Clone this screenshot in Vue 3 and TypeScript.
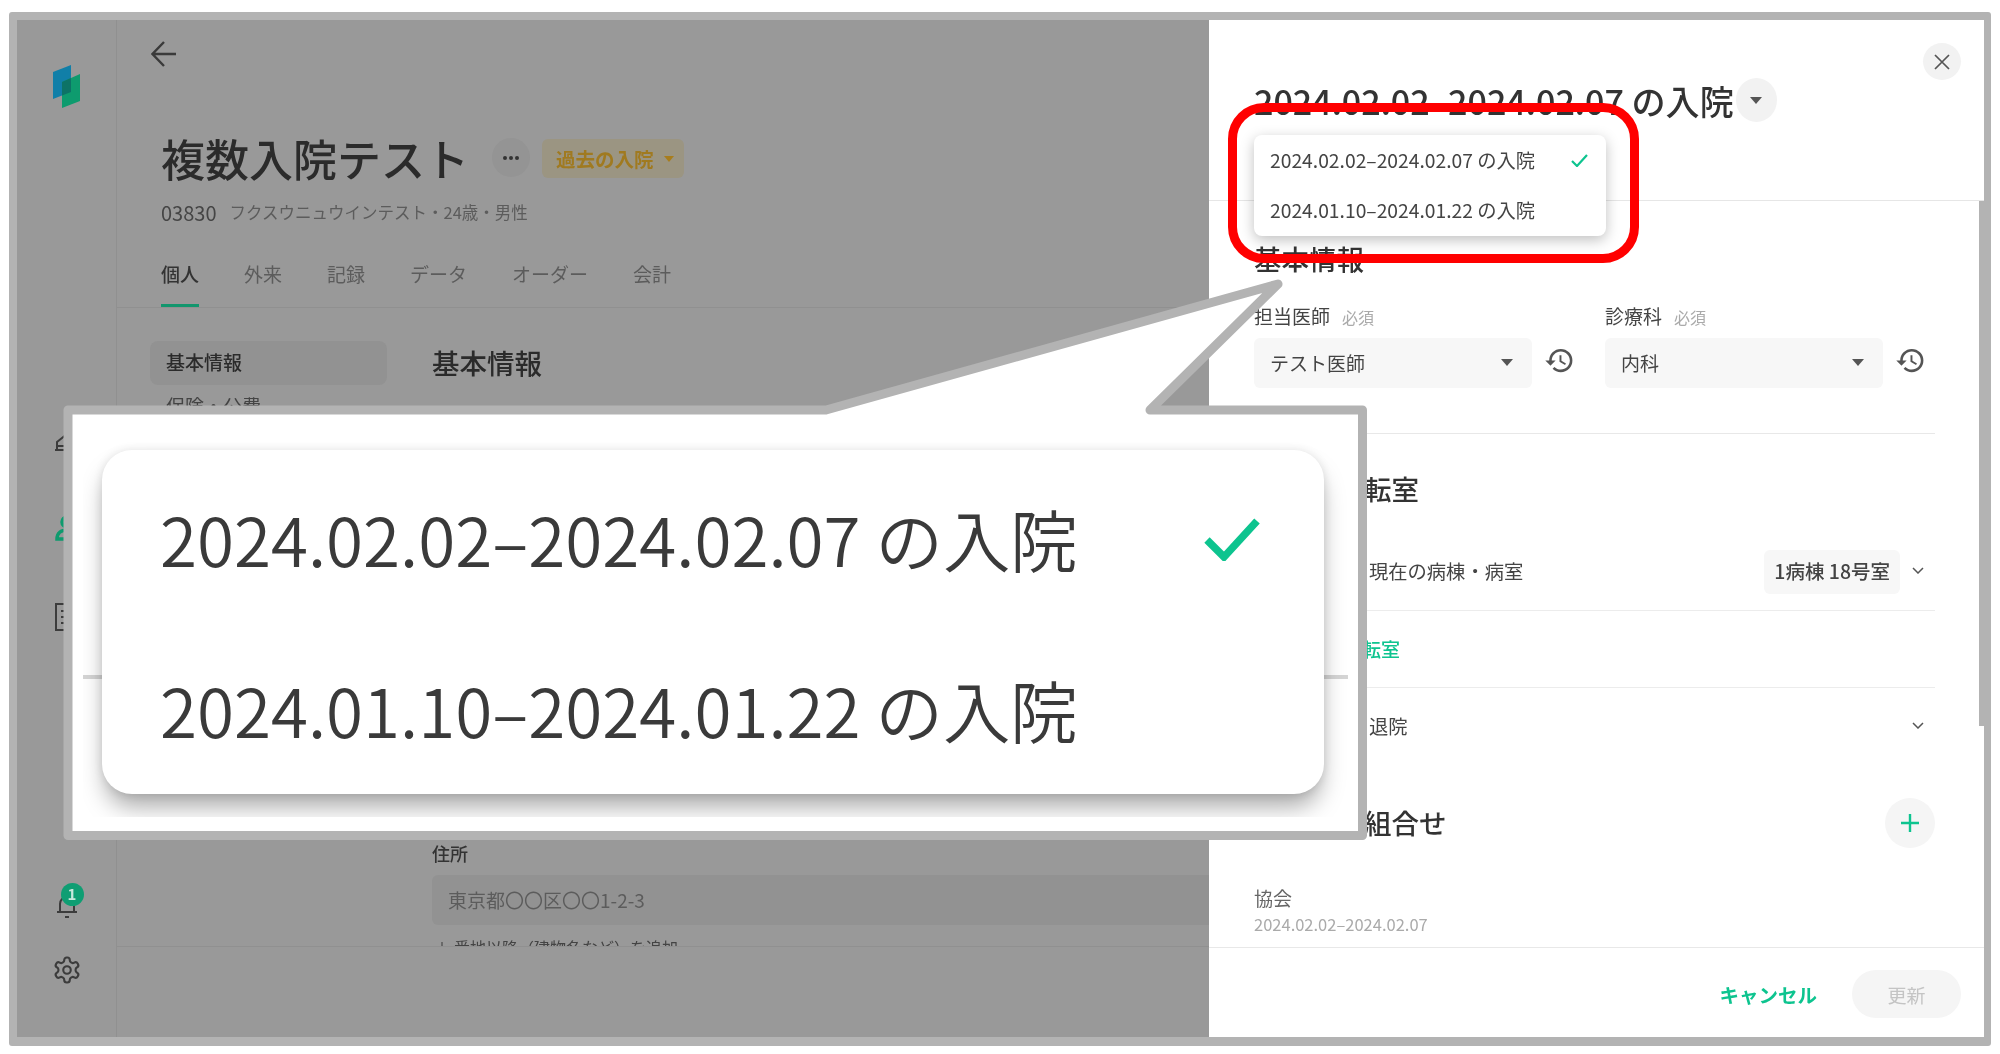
<script setup lang="ts">
const tabs = ['個人', '外来', '記録', 'データ', 'オーダー', '会計'];
const stays = ['2024.02.02–2024.02.07 の入院', '2024.01.10–2024.01.22 の入院'];
const historyPath =
  'M13 3a9 9 0 0 0-9 9H1l3.89 3.89.07.14L9 12H6c0-3.87 3.13-7 7-7s7 3.13 7 7-3.13 7-7 7c-1.93 0-3.68-.79-4.94-2.06l-1.42 1.42A8.954 8.954 0 0 0 13 21a9 9 0 0 0 0-18zm-1 5v5l4.28 2.54.72-1.21-3.5-2.08V8H12z';
const gearPath =
  'M12.22 2h-.44a2 2 0 0 0-2 2v.18a2 2 0 0 1-1 1.73l-.43.25a2 2 0 0 1-2 0l-.15-.08a2 2 0 0 0-2.73.73l-.22.38a2 2 0 0 0 .73 2.73l.15.1a2 2 0 0 1 1 1.72v.51a2 2 0 0 1-1 1.74l-.15.09a2 2 0 0 0-.73 2.73l.22.38a2 2 0 0 0 2.73.73l.15-.08a2 2 0 0 1 2 0l.43.25a2 2 0 0 1 1 1.73V20a2 2 0 0 0 2 2h.44a2 2 0 0 0 2-2v-.18a2 2 0 0 1 1-1.73l.43-.25a2 2 0 0 1 2 0l.15.08a2 2 0 0 0 2.73-.73l.22-.39a2 2 0 0 0-.73-2.73l-.15-.08a2 2 0 0 1-1-1.74v-.5a2 2 0 0 1 1-1.74l.15-.09a2 2 0 0 0 .73-2.73l-.22-.38a2 2 0 0 0-2.73-.73l-.15.08a2 2 0 0 1-2 0l-.43-.25a2 2 0 0 1-1-1.73V4a2 2 0 0 0-2-2z';
</script>

<template>
  <div class="page">
    <div class="frame">
      <aside class="rail">
        <svg class="logo" width="27" height="44" viewBox="0 0 27 44">
          <polygon points="0,8 18,1 18,28 0,35" fill="#117fa8" />
          <polygon points="9,18 27,10 27,37 9,44" fill="#0e9b6e" />
          <polygon points="9,18 18,14 18,28 9,31.5" fill="#0d7366" />
        </svg>
        <div class="rail-nav">
          <svg width="28" height="28" viewBox="0 0 28 28" fill="none" stroke="#3c3c3c" stroke-width="2">
            <path d="M2 25h24M4 25v-8l10-8 10 8v8M4 21h20" />
          </svg>
          <svg width="28" height="28" viewBox="0 0 28 28" fill="none" stroke="#0e9b6e" stroke-width="3.5">
            <circle cx="14" cy="8" r="5" />
            <path d="M4 25c0-6 4-9 10-9s10 3 10 9z" />
          </svg>
          <svg width="28" height="28" viewBox="0 0 28 28" fill="none" stroke="#3c3c3c" stroke-width="2">
            <path d="M3 1h22v26H3zM8 8h12M8 14h12M8 20h12" />
          </svg>
        </div>
        <div class="rail-bottom">
          <div class="bell">
            <svg width="28" height="28" viewBox="0 0 28 28" fill="none" stroke="#3c3c3c" stroke-width="2">
              <path d="M4 21h20M7 21v-8a7 7 0 0 1 14 0v8M12 26h4" />
            </svg>
            <span class="badge">1</span>
          </div>
          <svg width="30" height="30" viewBox="0 0 24 24" fill="none" stroke="#3c3c3c" stroke-width="1.7">
            <path :d="gearPath" />
            <circle cx="12" cy="12" r="3" />
          </svg>
        </div>
      </aside>

      <main class="main">
        <header class="head">
          <div class="topbar">
            <svg width="26" height="26" viewBox="0 0 26 26" fill="none" stroke="#3a3a3a" stroke-width="2.4">
              <path d="M25 13H2M13 1 1.5 13 13 25" />
            </svg>
          </div>
          <div class="title-row">
            <h1>複数入院テスト</h1>
            <button class="more">
              <svg width="16" height="4" viewBox="0 0 16 4" fill="#333">
                <circle cx="2" cy="2" r="2" /><circle cx="8" cy="2" r="2" /><circle cx="14" cy="2" r="2" />
              </svg>
            </button>
            <span class="past">過去の入院<i class="caret past-caret"></i></span>
          </div>
          <div class="meta"><b>03830</b><span>フクスウニュウインテスト・24歳・男性</span></div>
          <nav class="tabs">
            <a v-for="(t, i) in tabs" :key="t" :class="{ on: i === 0 }">{{ t }}</a>
          </nav>
        </header>
        <div class="body">
          <div class="side">
            <div class="side-item on">基本情報</div>
            <div class="side-item">保険・公費</div>
          </div>
          <div class="content">
            <h2>基本情報</h2>
            <div class="addr">
              <label>住所</label>
              <div class="addr-input">東京都〇〇区〇〇1-2-3</div>
              <div class="addr-add"><span class="plus">＋</span>番地以降（建物名など）を追加</div>
            </div>
          </div>
        </div>
        <div class="main-foot"></div>
      </main>

      <section class="panel">
        <header class="panel-head">
          <div class="stay">
            <span class="stay-title">{{ stays[0] }}</span>
            <button class="stay-btn"><i class="caret"></i></button>
          </div>
          <button class="close">
            <svg width="16" height="16" viewBox="0 0 16 16" stroke="#555" stroke-width="1.7">
              <path d="M1 1l14 14M15 1 1 15" />
            </svg>
          </button>
        </header>

        <div class="panel-body">
          <h2>基本情報</h2>
          <div class="fields">
            <div class="field">
              <div class="field-label">担当医師<small>必須</small></div>
              <div class="field-row">
                <div class="select">テスト医師<i class="caret"></i></div>
                <svg width="31" height="31" viewBox="0 0 24 24" fill="#555"><path :d="historyPath" /></svg>
              </div>
            </div>
            <div class="field">
              <div class="field-label">診療科<small>必須</small></div>
              <div class="field-row">
                <div class="select">内科<i class="caret"></i></div>
                <svg width="31" height="31" viewBox="0 0 24 24" fill="#555"><path :d="historyPath" /></svg>
              </div>
            </div>
          </div>

          <h2 class="sec">入退院・転室</h2>
          <div class="row row-room">
            <span>現在の病棟・病室</span>
            <div class="row-end">
              <span class="room">1病棟 18号室</span>
              <svg class="chev" width="12" height="7" viewBox="0 0 12 7" fill="none" stroke="#555" stroke-width="1.5">
                <path d="M1 1l5 5 5-5" />
              </svg>
            </div>
          </div>
          <div class="row-link">転室</div>
          <div class="row row-leave">
            <span>退院</span>
            <svg class="chev" width="12" height="7" viewBox="0 0 12 7" fill="none" stroke="#555" stroke-width="1.5">
              <path d="M1 1l5 5 5-5" />
            </svg>
          </div>

          <div class="ins-head">
            <h2>保険公費組合せ</h2>
            <button class="add">
              <svg width="18" height="18" viewBox="0 0 18 18" stroke="#0dc48f" stroke-width="2.4">
                <path d="M9 0v18M0 9h18" />
              </svg>
            </button>
          </div>
          <div class="ins-name">協会</div>
          <div class="ins-date">2024.02.02–2024.02.07</div>
        </div>

        <footer class="panel-foot">
          <button class="cancel">キャンセル</button>
          <button class="update">更新</button>
        </footer>

        <div class="scroll"></div>
        <ul class="menu">
          <li v-for="(s, i) in stays" :key="s">
            {{ s }}
            <svg v-if="i === 0" width="17" height="13" viewBox="0 0 17 13" fill="none" stroke="#0dc48f" stroke-width="2.2">
              <path d="M1 7l5 5L16 1" />
            </svg>
          </li>
        </ul>
        <div class="mark"></div>
      </section>
    </div>

    <!-- 拡大吹き出し -->
    <div class="callout">
      <svg class="callout-shape" width="1400" height="600" viewBox="0 0 1400 600">
        <path
          d="M68 410H826L1278 284 1150 410H1362.5V835.5H68Z"
          fill="#fff"
          stroke="#b3b3b3"
          stroke-width="9"
          stroke-linejoin="round"
          transform="translate(0 -270)"
        />
      </svg>
      <div class="crop">
        <div class="crop-line"></div>
        <ul class="big-menu">
          <li v-for="(s, i) in stays" :key="s">
            {{ s }}
            <svg v-if="i === 0" width="56" height="43" viewBox="0 0 56 43" fill="none" stroke="#0dc48f" stroke-width="7.5">
              <path d="M3 22l17 17L53 3" />
            </svg>
          </li>
        </ul>
      </div>
    </div>
  </div>
</template>

<style>
html, body {
  margin: 0;
  background: #fff;
  overflow: hidden;
}
</style>

<style scoped>
.page {
  position: relative;
  box-sizing: border-box;
  width: 2000px;
  height: 1054px;
  padding: 12px 9px 8px;
  font-family: "Noto Sans CJK JP", "Noto Sans", sans-serif;
  color: #333;
  filter: blur(0.45px);
}
.frame {
  box-sizing: border-box;
  display: flex;
  height: 1034px;
  width: 1982px;
  border: solid #b3b3b3;
  border-width: 8px 7px 9px 8px;
  border-radius: 3px;
  background: #999;
}
button {
  border: 0;
  padding: 0;
  font: inherit;
  display: flex;
  align-items: center;
  justify-content: center;
}
h1, h2, ul { margin: 0; padding: 0; }
ul { list-style: none; }

.caret {
  display: block;
  width: 0;
  height: 0;
  border: 6px solid transparent;
  border-top: 7px solid #555;
  border-bottom: 0;
}

/* rail */
.rail {
  box-sizing: border-box;
  flex: 0 0 100px;
  display: flex;
  flex-direction: column;
  align-items: center;
  padding: 44px 0 52px;
  border-right: 1px solid #909090;
}
.rail-nav {
  display: flex;
  flex-direction: column;
  gap: 61px;
  margin-top: 317px;
}
.rail-bottom {
  margin-top: auto;
  display: flex;
  flex-direction: column;
  align-items: center;
  gap: 36px;
}
.bell { position: relative; height: 28px; }
.badge {
  position: absolute;
  left: 8px;
  top: -8px;
  width: 23px;
  height: 23px;
  border-radius: 50%;
  background: #0f9e73;
  color: #c8e8dc;
  font-size: 15px;
  font-weight: 700;
  line-height: 22px;
  text-align: center;
}

/* main (dimmed) */
.main {
  flex: 0 0 1092px;
  min-width: 0;
  display: flex;
  flex-direction: column;
}
.head { padding-left: 44px; flex: none; }
.topbar {
  height: 68px;
  display: flex;
  align-items: center;
  margin-left: -10px;
}
.title-row {
  display: flex;
  align-items: flex-start;
  height: 46px;
  margin-top: 50px;
}
h1 {
  font-size: 44px;
  line-height: 40px;
  font-weight: 500;
  color: #2b2b2b;
}
.more {
  width: 38px;
  height: 39px;
  border-radius: 50%;
  background: #949494;
  margin-left: 23px;
}
.past {
  box-sizing: border-box;
  height: 39px;
  width: 142px;
  margin-left: 12px;
  margin-top: 1px;
  padding-left: 14px;
  display: flex;
  align-items: center;
  gap: 10px;
  border-radius: 6px;
  background: #9b9582;
  color: #a07a20;
  font-size: 19.5px;
  font-weight: 700;
}
.past-caret {
  border-width: 5px;
  border-top: 6px solid #a87d1c;
  border-bottom: 0;
}
.meta {
  display: flex;
  align-items: center;
  gap: 13px;
  height: 24px;
  margin-top: 16px;
  font-size: 16.5px;
  color: #5c5c5c;
}
.meta b {
  font-size: 20px;
  font-weight: 400;
  color: #454545;
}
.tabs {
  display: flex;
  gap: 45px;
  height: 49px;
  margin: 34px 0 0 -44px;
  padding-left: 44px;
  border-bottom: 1px solid #909090;
}
.tabs a {
  height: 46px;
  line-height: 32px;
  font-size: 19px;
  color: #5c5c5c;
  border-bottom: 3px solid transparent;
}
.tabs a.on {
  color: #333;
  font-weight: 500;
  border-bottom-color: #12966d;
}
.body {
  flex: 1;
  min-height: 0;
  overflow: hidden;
  display: flex;
  padding: 33px 0 0 33px;
}
.side { flex: 0 0 237px; }
.side-item {
  height: 44px;
  line-height: 42px;
  padding-left: 16px;
  font-size: 19px;
  color: #444;
  border-radius: 8px;
}
.side-item.on {
  background: #929292;
  font-weight: 500;
  color: #2b2b2b;
}
.content {
  flex: none;
  width: 800px;
  margin-left: 45px;
}
.content h2 {
  margin-top: 1px;
  font-size: 27.5px;
  line-height: 40px;
  font-weight: 500;
  color: #2b2b2b;
}
.addr { margin-top: 459px; }
.addr label {
  display: block;
  font-size: 18px;
  line-height: 24px;
  font-weight: 500;
  color: #333;
}
.addr-input {
  box-sizing: border-box;
  height: 50px;
  margin-top: 10px;
  padding-left: 16px;
  line-height: 50px;
  font-size: 19px;
  border-radius: 6px;
  background: #929292;
  color: #5c5c5c;
}
.addr-add {
  margin-top: 10px;
  font-size: 16px;
  line-height: 24px;
  color: #444;
}
.plus { margin: 0 4px 0 2px; }
.main-foot {
  flex: 0 0 90px;
  border-top: 1px solid #909090;
}

/* panel */
.panel {
  position: relative;
  flex: 1;
  min-width: 0;
  display: flex;
  flex-direction: column;
  background: #fff;
}
.panel-head {
  box-sizing: border-box;
  flex: 0 0 181px;
  display: flex;
  justify-content: space-between;
  padding: 0 23px 0 45px;
  border-bottom: 1px solid #e6e6e6;
}
.stay {
  display: flex;
  align-items: flex-start;
  margin-top: 58px;
}
.stay-title {
  font-size: 34.1px;
  line-height: 44px;
  font-weight: 500;
  color: #333;
}
.stay-btn {
  width: 41px;
  height: 44px;
  border-radius: 50%;
  background: #f2f2f2;
  margin-left: 2px;
}
.close {
  width: 38px;
  height: 37px;
  margin-top: 23px;
  border-radius: 50%;
  background: #f2f2f2;
}
.panel-body {
  box-sizing: border-box;
  flex: 1;
  min-height: 0;
  overflow: hidden;
  padding: 37px 49px 0 45px;
}
.panel-body h2 {
  font-size: 27.5px;
  line-height: 40px;
  font-weight: 500;
  color: #333;
}
.fields {
  display: flex;
  margin-top: 26px;
  padding-bottom: 45px;
  border-bottom: 1px solid #e8e8e8;
}
.field { flex: 0 0 351px; }
.field-label {
  font-size: 19px;
  line-height: 24px;
  color: #444;
}
.field-label small {
  margin-left: 12px;
  font-size: 16px;
  color: #aaa;
}
.field-row {
  display: flex;
  align-items: flex-start;
  gap: 12px;
  margin-top: 9px;
}
.field-row svg { margin-top: 7px; flex: none; }
.select {
  box-sizing: border-box;
  flex: 0 0 278px;
  height: 50px;
  padding: 0 19px 2px 16px;
  display: flex;
  align-items: center;
  justify-content: space-between;
  font-size: 19px;
  border-radius: 6px;
  background: #f7f7f7;
  color: #444;
}
.panel-body .sec { margin-top: 34px; }
.row {
  display: flex;
  align-items: center;
  justify-content: space-between;
  padding: 0 12px 0 115px;
  font-size: 19.3px;
  color: #444;
}
.row > span { margin-top: -2px; }
.row-room {
  height: 44px;
  margin-top: 42px;
  padding-bottom: 16px;
  border-bottom: 1px solid #ececec;
}
.row-end {
  display: flex;
  align-items: center;
  gap: 12px;
}
.room {
  height: 44px;
  padding: 0 10px;
  line-height: 42px;
  border-radius: 6px;
  background: #f7f7f7;
  font-weight: 500;
  font-size: 19.5px;
}
.chev { flex: none; margin: -4px -1px 0 0; }
.row-link {
  height: 76px;
  padding-left: 108px;
  line-height: 76px;
  font-size: 19px;
  font-weight: 500;
  color: #0dc48f;
  border-bottom: 1px solid #ececec;
}
.row-leave { height: 78px; }
.ins-head {
  display: flex;
  align-items: center;
  justify-content: space-between;
  height: 50px;
  margin-top: 32px;
}
.ins-head h2 { margin-top: -2px; }
.add {
  width: 50px;
  height: 50px;
  border-radius: 50%;
  background: #f5f5f5;
}
.ins-name {
  margin-top: 38px;
  font-size: 19px;
  line-height: 24px;
  color: #666;
}
.ins-date {
  margin-top: 3px;
  font-size: 16.5px;
  line-height: 22px;
  color: #aaa;
}
.panel-foot {
  box-sizing: border-box;
  flex: 0 0 90px;
  display: flex;
  align-items: center;
  justify-content: flex-end;
  gap: 35px;
  padding: 3px 23px 0 0;
  border-top: 1px solid #e8e8e8;
}
.cancel {
  background: none;
  font-size: 19.5px;
  font-weight: 700;
  color: #0dc48f;
}
.update {
  width: 109px;
  height: 48px;
  border-radius: 24px;
  background: #f5f5f5;
  font-size: 19px;
  color: #c4c4c4;
}
.scroll {
  position: absolute;
  right: 0;
  top: 181px;
  width: 5px;
  height: 525px;
  background: #b3b3b3;
}
.menu {
  position: absolute;
  left: 45px;
  top: 115px;
  box-sizing: border-box;
  width: 352px;
  height: 101px;
  border-radius: 8px;
  background: #fff;
  box-shadow: 0 4px 14px rgba(0, 0, 0, 0.25);
}
.menu li {
  height: 50px;
  padding: 0 18px 0 16px;
  display: flex;
  align-items: center;
  justify-content: space-between;
  font-size: 19.3px;
  color: #444;
}
.mark {
  position: absolute;
  left: 19px;
  top: 83px;
  box-sizing: border-box;
  width: 411px;
  height: 160px;
  border: 9px solid #f00;
  border-radius: 36px;
}

/* callout */
.callout {
  position: absolute;
  left: 0;
  top: 270px;
  width: 1400px;
  height: 600px;
}
.callout-shape {
  position: absolute;
  left: 0;
  top: 0;
}
.crop {
  position: absolute;
  left: 83px;
  top: 160px;
  box-sizing: border-box;
  width: 1265px;
  height: 387px;
  padding: 20px 24px 0 19px;
  overflow: hidden;
  background: #fff;
}
.crop-line {
  position: absolute;
  left: 0;
  right: 0;
  top: 245px;
  height: 4px;
  background: #d5d5d5;
}
.big-menu {
  position: relative;
  box-sizing: border-box;
  height: 344px;
  padding-top: 2px;
  border-radius: 30px;
  background: #fff;
  box-shadow: 0 16px 24px -4px rgba(0, 0, 0, 0.35), 0 0 10px rgba(0, 0, 0, 0.1);
}
.big-menu li {
  height: 171px;
  padding: 0 64px 0 58px;
  display: flex;
  align-items: center;
  justify-content: space-between;
  font-size: 67.4px;
  font-weight: 350;
  color: #3a3a3a;
}
.big-menu svg { margin-top: 4px; }
</style>
